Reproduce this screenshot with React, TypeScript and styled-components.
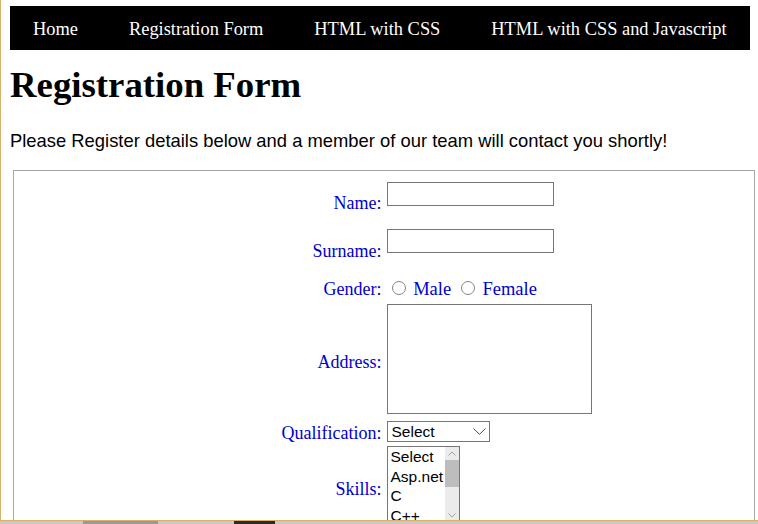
import React from "react";
import styled, { createGlobalStyle } from "styled-components";

const GlobalStyle = createGlobalStyle`
  html, body { margin: 0; padding: 0; background: #fff; }
  body { font-family: "Liberation Serif", "Times New Roman", serif; overflow: hidden; }
`;

const Frame = styled.div`
  height: 520px;
  border-left: 1px solid #d8b46c;
  border-bottom: 1px solid #dcb064;
  overflow: hidden;
  background: #fff;
`;

const Page = styled.div`
  padding: 6px 8px 0 9px;
`;

const Nav = styled.nav`
  display: flex;
  gap: 5px;
  height: 44px;
  box-sizing: border-box;
  padding-top: 1px;
  align-items: center;
  background: #000;
`;

const NavLink = styled.a`
  color: #fff;
  font-size: 18.4px;
  line-height: 20px;
  padding: 0 23px;
  text-decoration: none;
  white-space: nowrap;
`;

const Title = styled.h1`
  margin: 15px 0 0;
  font-size: 36.8px;
  line-height: 40px;
  font-weight: bold;
  color: #000;
`;

const Intro = styled.p`
  margin: 25px 0 0;
  font-family: "Liberation Sans", Arial, sans-serif;
  font-size: 18.4px;
  line-height: 21px;
  color: #000;
`;

const FormBox = styled.div`
  margin: 19px -5px 0 3px;
  border: 1px solid #a6a6a6;
  padding-top: 10px;
  height: 600px;
`;

const FormGrid = styled.div`
  display: grid;
  grid-template-columns: 1fr 1fr;
  column-gap: 5px;
`;

const Label = styled.label<{ $lift?: number }>`
  align-self: center;
  text-align: right;
  color: #0000cd;
  font-size: 18px;
  line-height: 20px;
  padding-bottom: ${(p) => p.$lift ?? 0}px;
`;

const Field = styled.div<{ $pad: string }>`
  padding: ${(p) => p.$pad};
  color: #0000cd;
  font-size: 18px;
  line-height: 20px;
  display: flex;
  flex-direction: column;
  align-items: flex-start;
`;

const TextInput = styled.input`
  display: block;
  width: 167px;
  height: 24px;
  box-sizing: border-box;
  border: 1px solid #767676;
  margin: 0;
  padding: 1px 2px;
  background: #fff;
`;

const Hint = styled.div`
  height: 21px;
`;

const RadioLine = styled.div`
  white-space: nowrap;
  font-size: 18.5px;
  height: 21px;
`;

const Radio = styled.input`
  appearance: none;
  -webkit-appearance: none;
  width: 14px;
  height: 14px;
  border: 1px solid #858585;
  border-radius: 50%;
  margin: 3px 3px 0 5px;
  box-sizing: border-box;
  background: #fff;
`;

const TextArea = styled.textarea`
  display: block;
  width: 205px;
  height: 110px;
  box-sizing: border-box;
  border: 1px solid #767676;
  margin: 0;
  resize: none;
  background: #fff;
`;

const SelectBox = styled.div`
  width: 103px;
  height: 21px;
  box-sizing: border-box;
  border: 1px solid #767676;
  display: flex;
  align-items: center;
  justify-content: space-between;
  padding: 0 3px 0 4px;
  font-family: "Liberation Sans", Arial, sans-serif;
  font-size: 15.5px;
  color: #000;
  background: #fff;
`;

const ListBox = styled.div`
  width: 73px;
  height: 79px;
  box-sizing: border-box;
  border: 1px solid #767676;
  display: flex;
  background: #fff;
`;

const Options = styled.div`
  flex: 1;
  overflow: hidden;
`;

const Option = styled.div`
  font-family: "Liberation Sans", Arial, sans-serif;
  font-size: 15.5px;
  line-height: 19.5px;
  padding-left: 3px;
  color: #000;
  white-space: nowrap;
`;

const ScrollBar = styled.div`
  width: 14px;
  background: #ebebeb;
  display: flex;
  flex-direction: column;
`;

const ScrollArrow = styled.div<{ $h: number }>`
  height: ${(p) => p.$h}px;
  display: flex;
  align-items: center;
  justify-content: center;
`;

const Thumb = styled.div`
  height: 27px;
  background: #bdbdbd;
`;

const Track = styled.div`
  flex: 1;
`;

const Strip = styled.div`
  height: 3px;
  display: flex;
  background: #c8c8c8;
`;

const StripSeg = styled.div<{ $w: number; $c: string }>`
  width: ${(p) => p.$w}px;
  background: ${(p) => p.$c};
`;

const Chevron = () => (
  <svg width="13" height="7" viewBox="0 0 13 7">
    <path d="M0.5 0.5 L6.5 6.3 L12.5 0.5" stroke="#4d4d4d" strokeWidth="1" fill="none" />
  </svg>
);

const SmallArrow = ({ up }: { up?: boolean }) => (
  <svg width="8" height="5" viewBox="0 0 8 5">
    <path d={up ? "M0.5 4.5 L4 1 L7.5 4.5" : "M0.5 0.5 L4 4 L7.5 0.5"} stroke="#a3a3a3" strokeWidth="1" fill="none" />
  </svg>
);

export default function App() {
  return (
    <>
      <GlobalStyle />
      <Frame>
        <Page>
          <Nav>
            <NavLink href="#">Home</NavLink>
            <NavLink href="#">Registration Form</NavLink>
            <NavLink href="#">HTML with CSS</NavLink>
            <NavLink href="#">HTML with CSS and Javascript</NavLink>
          </Nav>
          <Title>Registration Form</Title>
          <Intro>Please Register details below and a member of our team will contact you shortly!</Intro>
          <FormBox>
            <FormGrid>
              <Label $lift={3}>Name:</Label>
              <Field $pad="1px 0">
                <TextInput type="text" />
                <Hint />
              </Field>

              <Label $lift={1}>Surname:</Label>
              <Field $pad="1px 0">
                <TextInput type="text" />
                <Hint />
              </Field>

              <Label>Gender:</Label>
              <Field $pad="3px 0 4px">
                <RadioLine>
                  <Radio type="radio" name="gender" /> Male <Radio type="radio" name="gender" /> Female
                </RadioLine>
              </Field>

              <Label>Address:</Label>
              <Field $pad="1px 0 6px">
                <TextArea />
              </Field>

              <Label>Qualification:</Label>
              <Field $pad="1px 0 3px">
                <SelectBox>
                  <span>Select</span>
                  <Chevron />
                </SelectBox>
              </Field>

              <Label>Skills:</Label>
              <Field $pad="1px 0 8px">
                <ListBox>
                  <Options>
                    <Option>Select</Option>
                    <Option>Asp.net</Option>
                    <Option>C</Option>
                    <Option>C++</Option>
                  </Options>
                  <ScrollBar>
                    <ScrollArrow $h={13}>
                      <SmallArrow up />
                    </ScrollArrow>
                    <Thumb />
                    <Track />
                    <ScrollArrow $h={17}>
                      <SmallArrow />
                    </ScrollArrow>
                  </ScrollBar>
                </ListBox>
              </Field>
            </FormGrid>
          </FormBox>
        </Page>
      </Frame>
      <Strip>
        <StripSeg $w={83} $c="#c8c8c8" />
        <StripSeg $w={75} $c="#9a9a9a" />
        <StripSeg $w={76} $c="#c8c8c8" />
        <StripSeg $w={41} $c="#2b2b2b" />
      </Strip>
    </>
  );
}
